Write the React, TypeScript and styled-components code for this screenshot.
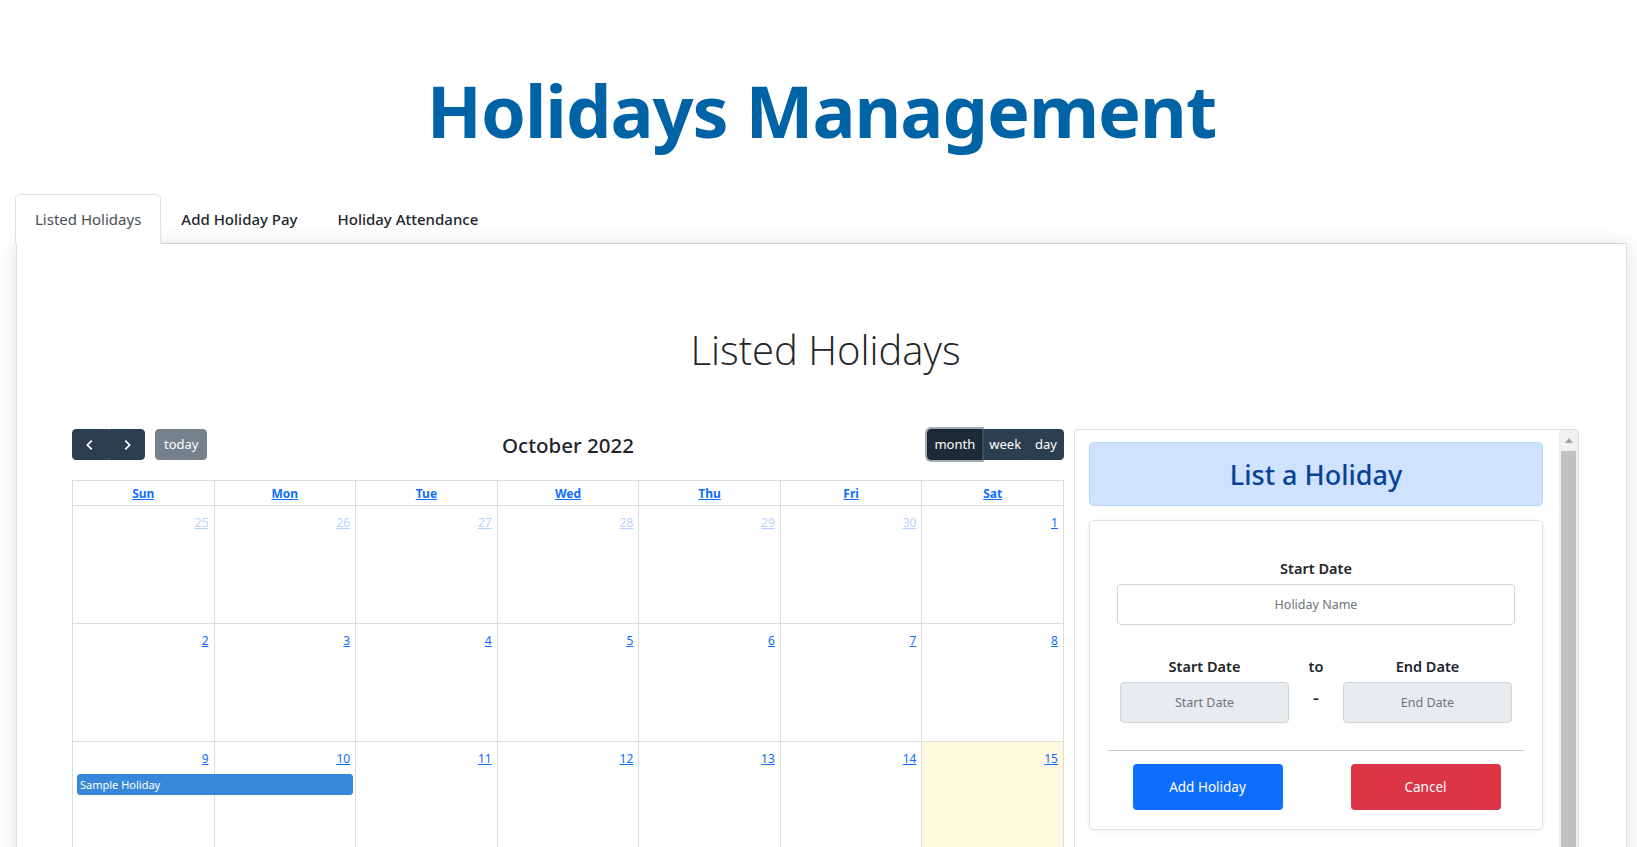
import styled, { createGlobalStyle } from "styled-components";

const GlobalStyle = createGlobalStyle`
  * {
    box-sizing: border-box;
  }

  body {
    margin: 0;
    background: #fff;
    color: #212529;
    font-family: "Noto Sans", "Open Sans", sans-serif;
  }
`;

const Page = styled.div`
  padding: 67px 10px 40px 16px;
`;

const Title = styled.h1`
  margin: 0 0 41px;
  text-align: center;
  font-size: 72px;
  line-height: 1.2;
  font-weight: 700;
  letter-spacing: -1px;
  color: #0063a6;
`;

const Tabs = styled.nav`
  display: flex;
  margin-left: -1px;
  border-bottom: 1px solid #dee2e6;
`;

const Tab = styled.button<{ $active?: boolean }>`
  position: relative;
  z-index: 1;
  margin-bottom: -1px;
  padding: 13px 19px;
  border: 1px solid ${(p) => (p.$active ? "#dee2e6" : "transparent")};
  border-bottom-color: ${(p) => (p.$active ? "#fff" : "transparent")};
  border-radius: 5px 5px 0 0;
  background: ${(p) => (p.$active ? "#fff" : "transparent")};
  color: ${(p) => (p.$active ? "#495057" : "#212529")};
  font-family: inherit;
  font-size: 15px;
  font-weight: ${(p) => (p.$active ? 400 : 500)};
  line-height: 22px;
  cursor: pointer;
`;

const Card = styled.section`
  border: 1px solid #dee2e6;
  border-top: 0;
  box-shadow: 0 0 18px rgba(0, 0, 0, 0.13);
  padding: 82px 47px 40px 55px;
`;

const Heading = styled.h2`
  margin: 0 0 55px;
  text-align: center;
  font-family: "Open Sans", "Noto Sans", sans-serif;
  font-size: 40px;
  font-weight: 300;
  line-height: 1.2;
  color: #212529;
`;

const Columns = styled.div`
  display: grid;
  grid-template-columns: 992px 505px;
  gap: 10px;
  align-items: start;
`;

/* calendar */

const Toolbar = styled.div`
  display: grid;
  grid-template-columns: 1fr auto 1fr;
  align-items: center;
  margin-bottom: 20px;
`;

const ToolbarChunk = styled.div<{ $end?: boolean }>`
  display: flex;
  align-items: center;
  gap: 10px;
  justify-self: ${(p) => (p.$end ? "end" : "start")};
`;

const MonthTitle = styled.h2`
  margin: 0;
  font-size: 20.5px;
  font-weight: 500;
  line-height: 1.2;
  color: #212529;
`;

const ButtonGroup = styled.div`
  display: flex;

  & > button {
    border-radius: 0;
  }

  & > button:first-child {
    border-radius: 4px 0 0 4px;
  }

  & > button:last-child {
    border-radius: 0 4px 4px 0;
  }
`;

const FcButton = styled.button<{ $active?: boolean; $muted?: boolean }>`
  display: flex;
  align-items: center;
  justify-content: center;
  height: 31px;
  padding: 0 8px;
  border: 1px solid ${(p) => (p.$active ? "#1a252f" : "#2c3e50")};
  border-radius: 4px;
  background: ${(p) => (p.$active ? "#1e2b37" : "#2c3e50")};
  color: #fff;
  font-family: inherit;
  font-size: 13px;
  line-height: 1.5;
  opacity: ${(p) => (p.$muted ? 0.65 : 1)};
  box-shadow: ${(p) => (p.$active ? "0 0 0 2px rgba(76, 91, 106, 0.5)" : "none")};
  position: relative;
  z-index: ${(p) => (p.$active ? 1 : 0)};
  cursor: pointer;
`;

const ViewButton = styled(FcButton)`
  padding: 0 6px;
`;

const IconButton = styled(FcButton)`
  width: 36.5px;
  padding: 0;
`;

const Grid = styled.div`
  border-top: 1px solid #ddd;
  border-left: 1px solid #ddd;
`;

const HeaderRow = styled.div`
  display: grid;
  grid-template-columns: repeat(7, 1fr);
  height: 25px;
`;

const HeaderCell = styled.a`
  display: flex;
  align-items: center;
  justify-content: center;
  border-right: 1px solid #ddd;
  border-bottom: 1px solid #ddd;
  color: #0d6efd;
  font-size: 12px;
  font-weight: 700;
  text-decoration: underline;
`;

const Week = styled.div`
  display: grid;
  grid-template-columns: repeat(7, 1fr);
  grid-template-rows: 32px 21px 1fr;
  height: 118px;
`;

const DayCell = styled.div<{ $col: number; $today?: boolean }>`
  grid-row: 1 / -1;
  grid-column: ${(p) => p.$col};
  padding: 4px 5px;
  border-right: 1px solid #ddd;
  border-bottom: 1px solid #ddd;
  background: ${(p) => (p.$today ? "rgba(255, 220, 40, 0.15)" : "transparent")};
  text-align: right;
`;

const DayNumber = styled.a<{ $other?: boolean }>`
  color: #0d6efd;
  font-size: 12px;
  line-height: 18px;
  text-decoration: underline;
  opacity: ${(p) => (p.$other ? 0.3 : 1)};
`;

const EventBar = styled.div<{ $start: number; $span: number }>`
  grid-row: 2;
  grid-column: ${(p) => p.$start} / span ${(p) => p.$span};
  z-index: 1;
  margin: 0 3px 0 4px;
  padding: 0 2px;
  border: 1px solid #3788d8;
  border-radius: 3px;
  background: #3788d8;
  color: #fff;
  font-size: 11px;
  line-height: 19px;
  white-space: nowrap;
  overflow: hidden;
`;

/* side panel */

const Panel = styled.aside`
  display: flex;
  height: 620px;
  border: 1px solid #dfdfdf;
  border-radius: 3px;
  overflow: hidden;
`;

const PanelBody = styled.div`
  flex: 1;
  padding: 12px 16px 0 14px;
`;

const Scrollbar = styled.div`
  display: flex;
  flex-direction: column;
  align-items: center;
  width: 19px;
  padding: 0 2px;
  background: #f1f1f1;
`;

const ScrollArrow = styled.div`
  display: flex;
  align-items: center;
  justify-content: center;
  height: 21px;
  width: 100%;
`;

const ScrollThumb = styled.div`
  flex: 1;
  width: 100%;
  background: #c1c1c1;
`;

const PanelHeader = styled.div`
  display: flex;
  align-items: center;
  justify-content: center;
  height: 64px;
  border: 1px solid #b6d4fe;
  border-radius: 5px;
  background: #cfe2ff;
  color: #084298;
  font-size: 27px;
  font-weight: 500;
`;

const FormCard = styled.form`
  margin-top: 14px;
  padding: 36px 18px 19px;
  border: 1px solid #dee2e6;
  border-radius: 5px;
  box-shadow: 0 1px 4px rgba(0, 0, 0, 0.08);
`;

const Field = styled.div`
  padding: 0 9px;
  text-align: center;
`;

const Label = styled.label`
  display: block;
  margin-bottom: 5px;
  font-size: 14.5px;
  font-weight: 600;
  line-height: 22px;
  color: #212529;
`;

const TextInput = styled.input<{ $filled?: boolean }>`
  display: block;
  width: 100%;
  height: 41px;
  border: 1px solid #ced4da;
  border-radius: 4px;
  background: ${(p) => (p.$filled ? "#e9ecef" : "#fff")};
  font-family: inherit;
  font-size: 12.5px;
  text-align: center;
  color: #212529;

  &::placeholder {
    color: #6c757d;
  }
`;

const DateRow = styled.div`
  display: grid;
  grid-template-columns: 169px 1fr 169px;
  align-items: start;
  margin-top: 30px;
  padding: 0 12px;
  text-align: center;
`;

const Dash = styled.div`
  font-size: 20px;
  line-height: 22px;
  margin-top: 10px;
`;

const Divider = styled.hr`
  margin: 27px 0 13px;
  border: 0;
  border-top: 1px solid #c8c8c8;
`;

const ActionRow = styled.div`
  display: grid;
  grid-template-columns: 169px 1fr 169px;
  padding: 0 14px 0 15px;
`;

const ActionButton = styled.button<{ $tone: "primary" | "danger" }>`
  justify-self: center;
  width: 150px;
  height: 46px;
  border: 0;
  border-radius: 4px;
  background: ${(p) => (p.$tone === "primary" ? "#0d6efd" : "#dc3545")};
  color: #fff;
  font-family: inherit;
  font-size: 13.5px;
  cursor: pointer;

  &:last-child {
    grid-column: 3;
  }
`;

const Chevron = ({ dir }: { dir: "left" | "right" }) => (
  <svg width="14" height="14" viewBox="0 0 16 16">
    <polyline
      points={dir === "left" ? "10,3 5,8 10,13" : "6,3 11,8 6,13"}
      fill="none"
      stroke="#fff"
      strokeWidth="2"
    />
  </svg>
);

const DAYS = ["Sun", "Mon", "Tue", "Wed", "Thu", "Fri", "Sat"];

const weeks: { day: number; other?: boolean; today?: boolean }[][] = [
  [25, 26, 27, 28, 29, 30].map((d) => ({ day: d, other: true })).concat([{ day: 1 }]),
  [2, 3, 4, 5, 6, 7, 8].map((d) => ({ day: d })),
  [9, 10, 11, 12, 13, 14, 15].map((d) => ({ day: d, today: d === 15 })),
  [16, 17, 18, 19, 20, 21, 22].map((d) => ({ day: d })),
  [23, 24, 25, 26, 27, 28, 29].map((d) => ({ day: d })),
  [{ day: 30 }, { day: 31 }].concat(
    [1, 2, 3, 4, 5].map((d) => ({ day: d, other: true }))
  ),
];

const Calendar = () => (
  <div>
    <Toolbar>
      <ToolbarChunk>
        <ButtonGroup>
          <IconButton aria-label="prev">
            <Chevron dir="left" />
          </IconButton>
          <IconButton aria-label="next">
            <Chevron dir="right" />
          </IconButton>
        </ButtonGroup>
        <FcButton $muted>today</FcButton>
      </ToolbarChunk>
      <MonthTitle>October 2022</MonthTitle>
      <ToolbarChunk $end>
        <ButtonGroup>
          <ViewButton $active>month</ViewButton>
          <ViewButton>week</ViewButton>
          <ViewButton>day</ViewButton>
        </ButtonGroup>
      </ToolbarChunk>
    </Toolbar>
    <Grid>
      <HeaderRow>
        {DAYS.map((d) => (
          <HeaderCell key={d}>{d}</HeaderCell>
        ))}
      </HeaderRow>
      {weeks.map((week, i) => (
        <Week key={i}>
          {week.map((cell, col) => (
            <DayCell key={col} $col={col + 1} $today={cell.today}>
              <DayNumber $other={cell.other}>{cell.day}</DayNumber>
            </DayCell>
          ))}
          {i === 2 && (
            <EventBar $start={1} $span={2}>
              Sample Holiday
            </EventBar>
          )}
        </Week>
      ))}
    </Grid>
  </div>
);

const HolidayForm = () => (
  <Panel>
    <PanelBody>
      <PanelHeader>List a Holiday</PanelHeader>
      <FormCard onSubmit={(e) => e.preventDefault()}>
        <Field>
          <Label>Start Date</Label>
          <TextInput placeholder="Holiday Name" />
        </Field>
        <DateRow>
          <div>
            <Label>Start Date</Label>
            <TextInput $filled readOnly placeholder="Start Date" />
          </div>
          <div>
            <Label>to</Label>
            <Dash>-</Dash>
          </div>
          <div>
            <Label>End Date</Label>
            <TextInput $filled readOnly placeholder="End Date" />
          </div>
        </DateRow>
        <Divider />
        <ActionRow>
          <ActionButton $tone="primary">Add Holiday</ActionButton>
          <ActionButton $tone="danger" type="button">
            Cancel
          </ActionButton>
        </ActionRow>
      </FormCard>
    </PanelBody>
    <Scrollbar>
      <ScrollArrow>
        <svg width="8" height="5" viewBox="0 0 8 5">
          <polygon points="4,0 8,5 0,5" fill="#a3a3a3" />
        </svg>
      </ScrollArrow>
      <ScrollThumb />
    </Scrollbar>
  </Panel>
);

export default function App() {
  return (
    <>
      <GlobalStyle />
      <Page>
        <Title>Holidays Management</Title>
        <Tabs>
          <Tab $active>Listed Holidays</Tab>
          <Tab>Add Holiday Pay</Tab>
          <Tab>Holiday Attendance</Tab>
        </Tabs>
        <Card>
          <Heading>Listed Holidays</Heading>
          <Columns>
            <Calendar />
            <HolidayForm />
          </Columns>
        </Card>
      </Page>
    </>
  );
}
